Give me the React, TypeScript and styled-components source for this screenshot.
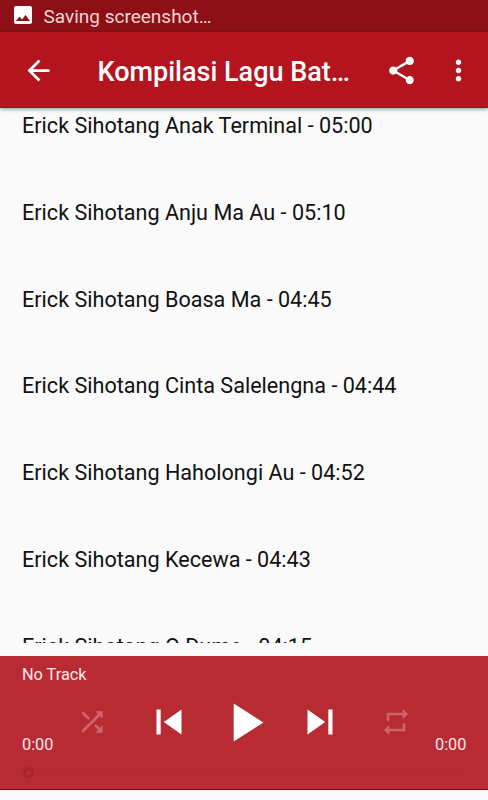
import React from "react";
import styled, { createGlobalStyle } from "styled-components";

const GlobalStyle = createGlobalStyle`
  * { box-sizing: border-box; }
  body { margin: 0; background: #fafafa; font-family: Roboto, sans-serif; }
`;

const Screen = styled.div`
  width: 488px;
  height: 800px;
  overflow: hidden;
  display: flex;
  flex-direction: column;
  background: #fafafa;
`;

const StatusBar = styled.header`
  flex: none;
  height: 32px;
  padding: 3px 11px 0;
  display: flex;
  align-items: flex-start;
  gap: 8.5px;
  background: #8d1017;
  color: #f4d4d2;
  font-size: 19px;
  line-height: 28px;
`;

const AppBar = styled.nav`
  flex: none;
  height: 76px;
  padding: 2px 13.5px 0 21.5px;
  display: flex;
  align-items: center;
  background: #b3141e;
  border-bottom: 1px solid #a00d17;
  color: #fff;
  box-shadow: 0 1px 4px rgba(0, 0, 0, 0.45);
  z-index: 1;
`;

const Title = styled.h1`
  margin: 2px 0 0 43px;
  width: 288px;
  font-size: 27px;
  font-weight: 500;
  line-height: 36px;
  white-space: nowrap;
`;

const Actions = styled.div`
  display: flex;
  gap: 24px;
`;

const TrackList = styled.ul`
  flex: none;
  height: 535px;
  margin: 0 0 13px;
  padding: 0 0 0 22px;
  overflow: hidden;
  list-style: none;
`;

const Track = styled.li`
  height: 86.8px;
  padding-top: 3px;
  color: #111;
  font-size: 21.6px;
  line-height: 30px;
  white-space: nowrap;
`;

const Player = styled.footer`
  flex: none;
  height: 134px;
  display: flex;
  flex-direction: column;
  background: #b92b33;
  border-bottom: 1px solid #7d0810;
  color: #fbe9ea;
  font-size: 16.3px;
  line-height: 20px;
`;

const NowPlaying = styled.div`
  height: 33px;
  padding: 9px 22px 0;
`;

const Controls = styled.div`
  height: 66px;
  padding: 0 21px 0 22px;
  display: flex;
`;

const Time = styled.span`
  width: 32px;
  align-self: flex-end;
  white-space: nowrap;
`;

const Buttons = styled.div`
  width: 336px;
  margin: 0 23px 0 22px;
  display: flex;
  align-items: center;
  justify-content: space-between;
`;

const Transport = styled.div`
  display: flex;
  align-items: center;
  gap: 18px;
`;

const Glyph = styled.svg<{ $size: number; $dim?: boolean }>`
  flex: none;
  display: block;
  width: ${(p) => p.$size}px;
  height: ${(p) => p.$size}px;
  fill: ${(p) => (p.$dim ? "#cc656b" : "#fff")};
`;

const Seek = styled.div`
  height: 34px;
  padding: 0 29px 0 23px;
  display: flex;
  align-items: center;
`;

const Thumb = styled.span`
  width: 11px;
  height: 11px;
  border: 3px solid #a9222b;
  border-radius: 50%;
`;

const Rail = styled.span`
  flex: 1;
  height: 1px;
  margin-left: 5px;
  background: #b3282f;
`;

const paths = {
  image:
    "M21 19V5c0-1.100-.9-2-2-2H5c-1.100 0-2 .9-2 2v14c0 1.100.9 2 2 2h14c1.100 0 2-.9 2-2zM8.500 13.500l2.500 3.010L14.500 12l4.500 6H5l3.500-4.500z",
  back: "M20 11H7.830l5.590-5.590L12 4l-8 8 8 8 1.410-1.410L7.830 13H20v-2z",
  share:
    "M18 16.080c-.76 0-1.440.3-1.960.77L8.910 12.700c.05-.23.09-.46.09-.7s-.04-.47-.09-.7l7.050-4.110c.54.5 1.250.81 2.040.81 1.660 0 3-1.340 3-3s-1.340-3-3-3-3 1.340-3 3c0 .24.04.47.09.7L8.040 9.810C7.500 9.310 6.790 9 6 9c-1.660 0-3 1.340-3 3s1.340 3 3 3c.79 0 1.500-.31 2.040-.81l7.120 4.160c-.05.21-.08.43-.08.65 0 1.610 1.310 2.920 2.920 2.920s2.920-1.310 2.920-2.920-1.310-2.920-2.920-2.920z",
  more: "M12 8c1.100 0 2-.9 2-2s-.9-2-2-2-2 .9-2 2 .9 2 2 2zm0 2c-1.100 0-2 .9-2 2s.9 2 2 2 2-.9 2-2-.9-2-2-2zm0 6c-1.100 0-2 .9-2 2s.9 2 2 2 2-.9 2-2-.9-2-2-2z",
  shuffle:
    "M10.590 9.170L5.410 4 4 5.410l5.170 5.170 1.420-1.410zM14.500 4l2.040 2.040L4 18.590 5.410 20 17.960 7.460 20 9.500V4h-5.500zm.33 9.410l-1.410 1.410 3.130 3.130L14.500 20H20v-5.500l-2.040 2.040-3.130-3.130z",
  previous: "M6 6h2v12H6zm3.500 6l8.500 6V6z",
  play: "M8 5v14l11-7z",
  next: "M6 18l8.500-6L6 6v12zM16 6v12h2V6h-2z",
  repeat: "M7 7h10v3l4-4-4-4v3H5v6h2V7zm10 10H7v-3l-4 4 4 4v-3h12v-6h-2v4z",
};

function Icon({ name, size, dim }: { name: keyof typeof paths; size: number; dim?: boolean }) {
  return (
    <Glyph viewBox="0 0 24 24" $size={size} $dim={dim} aria-hidden="true">
      <path d={paths[name]} />
    </Glyph>
  );
}

const tracks = [
  "Erick Sihotang Anak Terminal - 05:00",
  "Erick Sihotang Anju Ma Au - 05:10",
  "Erick Sihotang Boasa Ma - 04:45",
  "Erick Sihotang Cinta Salelengna - 04:44",
  "Erick Sihotang Haholongi Au - 04:52",
  "Erick Sihotang Kecewa - 04:43",
  "Erick Sihotang O Dume - 04:15",
];

export default function App() {
  return (
    <Screen>
      <GlobalStyle />
      <StatusBar>
        <Icon name="image" size={24} />
        <span>Saving screenshot…</span>
      </StatusBar>
      <AppBar>
        <Icon name="back" size={33} />
        <Title>Kompilasi Lagu Bat…</Title>
        <Actions>
          <Icon name="share" size={33} />
          <Icon name="more" size={33} />
        </Actions>
      </AppBar>
      <TrackList>
        {tracks.map((track) => (
          <Track key={track}>{track}</Track>
        ))}
      </TrackList>
      <Player>
        <NowPlaying>No Track</NowPlaying>
        <Controls>
          <Time>0:00</Time>
          <Buttons>
            <Icon name="shuffle" size={32} dim />
            <Transport>
              <Icon name="previous" size={50} />
              <Icon name="play" size={65} />
              <Icon name="next" size={50} />
            </Transport>
            <Icon name="repeat" size={32} dim />
          </Buttons>
          <Time>0:00</Time>
        </Controls>
        <Seek>
          <Thumb />
          <Rail />
        </Seek>
      </Player>
    </Screen>
  );
}
